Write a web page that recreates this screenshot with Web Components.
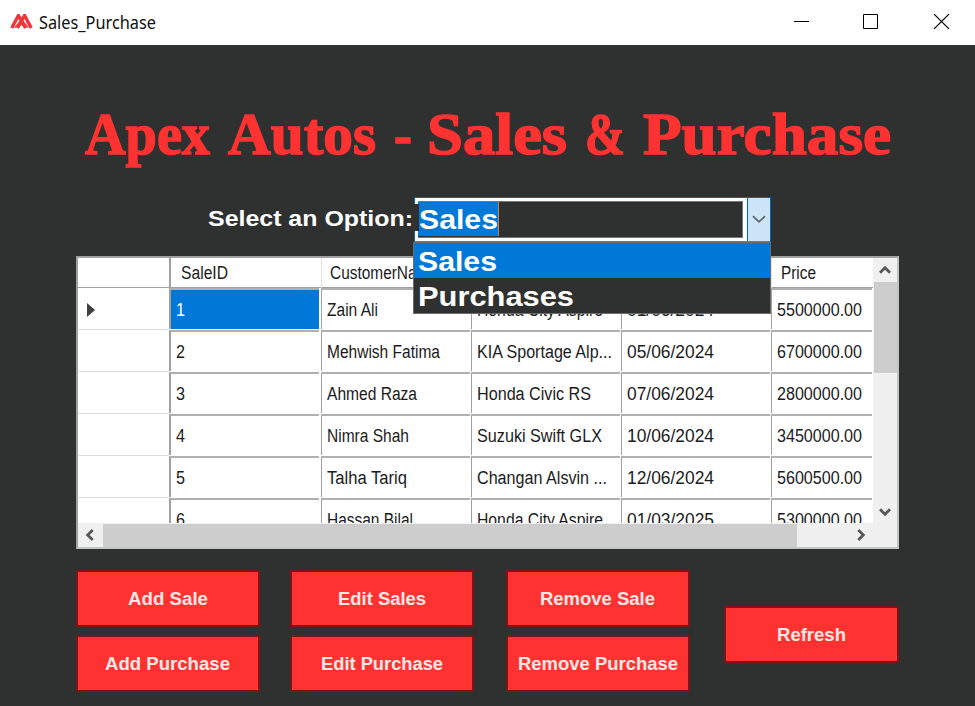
<!DOCTYPE html>
<html lang="en">
<head>
<meta charset="utf-8">
<title>Sales_Purchase</title>
<style>
html,body{margin:0;height:100%;overflow:hidden;background:#2f3130;font-family:"Liberation Sans",Arial,sans-serif}
</style>
</head>
<body>
<sales-window></sales-window>
<script>
const define = (name, html, ready) => customElements.define(name, class extends HTMLElement {
  constructor() { super(); this.attachShadow({mode: 'open'}); }
  connectedCallback() {
    this.shadowRoot.innerHTML = html;
    if (ready) ready(this, this.shadowRoot);
  }
});

// A single line of text condensed or expanded to the width given in "w".
customElements.define('fit-text', class extends HTMLElement {
  connectedCallback() {
    const label = this.getAttribute('text');
    const root = this.shadowRoot || this.attachShadow({mode: 'open'});
    root.innerHTML = `<style>:host{display:block;flex:none;line-height:1;white-space:pre;width:${this.getAttribute('w')}px}
      span{display:inline-block;transform-origin:0 0;vertical-align:top}</style><span></span>`;
    const s = root.querySelector('span');
    s.textContent = label;
    const n = s.getBoundingClientRect().width;
    if (n) s.style.transform = `scaleX(${this.getAttribute('w') / n})`;
  }
});

define('title-bar', `<style>
:host{display:flex;height:45px;background:#fff;color:#111;align-items:center;box-sizing:border-box;font:18px "Noto Sans","Open Sans",sans-serif}
.logo{margin-left:10px;margin-top:-3px}
fit-text{margin-left:6px;margin-top:-1px}
.ctl{margin-left:auto;margin-top:-2px;display:flex;gap:54px;margin-right:25px}
svg{display:block}
</style>
<svg class="logo" width="23" height="15" viewBox="0 0 23 15" fill="none" stroke="#f23338" stroke-width="3.4">
<path d="M1.8 14 8.4 1.5 15.6 14M7.4 14 14.6 1.5 21.2 14"/><path d="M5 13.6 11.5 5.6 18 13.6M8.4 13 11.5 9.6 14.6 13" stroke-width="1.5"/></svg>
<fit-text w="117" text="Sales_Purchase"></fit-text>
<div class="ctl">
<svg width="15" height="15"><path d="M0 7.5H15" stroke="#000"/></svg>
<svg width="15" height="15"><path d="M.5 .5H14.5V14.5H.5Z" fill="none" stroke="#000"/></svg>
<svg width="18" height="15" viewBox="-2 0 18 15"><path d="M0 0 15 15M15 0 0 15" stroke="#000" stroke-width="1.1"/></svg>
</div>`);

define('option-box', `<style>
:host{display:block;position:relative;width:357px;height:45px;color:#fff;font-weight:bold;font-size:28px}
.box{display:flex;height:45px;box-sizing:border-box;border:1px solid #0067b8;border-bottom-color:#5d7f95;background:#fff}
.edit{flex:1;margin:3px 4px 3px 3px;background:#2f3130;border:1px solid #777;border-left:0;display:flex;align-items:flex-start}
.sel{background:#0078d7;height:34px;padding:4px 0 0 1px;box-sizing:border-box;border-right:1px solid #d48347}
.drop{width:22px;border-left:1px solid #0067b8;background:#cce4f7;display:flex;align-items:center;justify-content:center}
.notch{position:absolute;left:-1px;top:7px;width:6px;height:27px;background:#2f3130}
.list{position:absolute;left:-1px;top:45px;width:358px;height:72px;box-sizing:border-box;border:1px solid #6b6d6d;background:#2f3130;z-index:2}
.item{height:35px;padding:5px 0 0 4px;box-sizing:border-box}
.on{background:#0078d7}
</style>
<div class="box"><div class="edit"><div class="sel"><fit-text w="79" text="Sales"></fit-text></div></div>
<div class="drop"><svg width="14" height="9" viewBox="0 0 14 9"><path d="M1 1.2 7 6.8 13 1.2" fill="none" stroke="#5b6670" stroke-width="1.8"/></svg></div></div>
<div class="notch"></div>
<div class="list"><div class="item on"><fit-text w="79" text="Sales"></fit-text></div><div class="item"><fit-text w="156" text="Purchases"></fit-text></div></div>`);

define('scroll-bar', `<style>
:host{display:flex;background:#f0f0f0;align-items:stretch}
:host([dir-v]){flex-direction:column}
.a{flex:none;display:flex;align-items:center;justify-content:center;width:25px}
.a svg{margin:-1px 0 0 -2px}
:host([dir-v]) .a{width:auto;height:24px}
.t{background:#cdcdcd;flex:none}
.s{flex:1}
</style><div class="a"></div><div class="t"></div><div class="s"></div><div class="a"></div>`, (el, r) => {
  const v = el.hasAttribute('dir-v'), a = r.querySelectorAll('.a');
  r.querySelector('.t').style[v ? 'height' : 'width'] = el.getAttribute('thumb') + 'px';
  const icon = deg => `<svg width="12" height="12" viewBox="0 0 12 12"><path transform="rotate(${deg} 6 6)" d="M1 8.7 6 3.7 11 8.7" fill="none" stroke="#585858" stroke-width="2.8"/></svg>`;
  a[0].innerHTML = icon(v ? 0 : -90);
  a[1].innerHTML = icon(v ? 180 : 90);
});

define('data-grid', `<style>
:host{display:grid;grid-template:266px 23px/796px 23px;width:823px;height:293px;box-sizing:border-box;border:2px solid #a0a0a0;border-right-color:#c4c4c4;border-bottom-color:#c4c4c4;background:#f0f0f0;color:#1b1b22;font-size:18px}
.view{overflow:hidden;background:#fff;width:795px;height:265px}
.r{display:grid;grid-template-columns:91px 152px repeat(3,150px) 102px;height:42px}
.h{height:30px}
.h>div{padding:6px 0 0 8px;border-left:1px solid #e2e2e2;box-sizing:border-box}
.h>div:first-child{border:0}
.h>div:nth-child(2){border-left:2px solid #a0a0a0;padding-left:10px}
.h>div:last-child{padding-left:9px}
.h{box-shadow:inset 0 -1px #a0a0a0}
.n{display:flex;align-items:center;padding:2px 0 0 9px;border-bottom:1px solid #dcdcdc;box-sizing:border-box}
.c{border-top:2px solid #b0b0b0;border-left:1px solid #a0a0a0;margin:0 1px 1px 0;padding:11px 0 0 5px;box-sizing:border-box;overflow:hidden}
.c:nth-child(2){border-left-width:2px;margin-right:2px;padding-left:5px}
.on{background:#0078d7;color:#fff}
</style><div class="view"></div><scroll-bar dir-v thumb="91"></scroll-bar><scroll-bar thumb="694"></scroll-bar>`, (el, r) => {
  const cell = (t, w) => t ? `<fit-text w="${w}" text="${t}"></fit-text>` : '';
  const heads = [['SaleID', 47], ['CustomerName', 108], ['', 0], ['', 0], ['Price', 35]];
  const rows = [
    ['1', 'Zain Ali', 51, 'Honda City Aspire', 126, '01/06/2024', '5500000.00'],
    ['2', 'Mehwish Fatima', 113, 'KIA Sportage Alp...', 135, '05/06/2024', '6700000.00'],
    ['3', 'Ahmed Raza', 90, 'Honda Civic RS', 114, '07/06/2024', '2800000.00'],
    ['4', 'Nimra Shah', 82, 'Suzuki Swift GLX', 125, '10/06/2024', '3450000.00'],
    ['5', 'Talha Tariq', 80, 'Changan Alsvin ...', 130, '12/06/2024', '5600500.00'],
    ['6', 'Hassan Bilal', 86, 'Honda City Aspire', 126, '01/03/2025', '5300000.00']];
  r.querySelector('.view').innerHTML =
    `<div class="r h"><div></div>${heads.map(h => `<div>${cell(...h)}</div>`).join('')}</div>` +
    rows.map((d, i) => `<div class="r"><div class="n">${i ? '' : '<svg width="8" height="14"><path d="M0 0 8 7 0 14Z" fill="#404040"/></svg>'}</div>
      <div class="c${i ? '' : ' on'}">${cell(d[0], 9)}</div><div class="c">${cell(d[1], d[2])}</div><div class="c">${cell(d[3], d[4])}</div>
      <div class="c">${cell(d[5], 87)}</div><div class="c">${cell(d[6], 85)}</div></div>`).join('');
});

define('red-button', `<style>
:host{display:flex;width:184px;height:57px;box-sizing:border-box;border:2px solid #7b1415;background:#ff3232;color:#ffe7e4;font-size:18px;font-weight:bold;align-items:center;justify-content:center}
</style><slot></slot>`);

define('sales-window', `<style>
:host{display:flex;flex-direction:column;width:975px;height:706px;background:#2f3130;overflow:hidden}
.title{display:flex;margin:59px 0 0 85px;height:61px;font:bold 60px "Liberation Serif",serif;color:#ff3232;-webkit-text-stroke:1.5px #ff3232}
.title>*+*{margin-left:18px}
.pick{display:flex;margin:32px 0 0 208px;height:45px;color:#fff;font-size:22px;font-weight:bold}
.pick>fit-text{margin:11px 1px 0 0}
data-grid{margin:14px 0 0 76px}
.foot{display:flex;align-items:center;margin:21px 0 0 76px}
.acts{display:grid;grid-template-columns:214px 216px 184px;row-gap:8px;height:122px;width:615px}
.foot>red-button{width:175px;margin:7px 0 0 33px}
.acts fit-text{margin-left:-1px}
</style>
<title-bar></title-bar>
<div class="title"><fit-text w="125" text="Apex"></fit-text><fit-text w="148" text="Autos"></fit-text><fit-text w="18" text="-"></fit-text><fit-text w="140" style="margin-left:15px" text="Sales"></fit-text><fit-text w="40" text="&amp;"></fit-text><fit-text w="248" text="Purchase"></fit-text></div>
<div class="pick"><fit-text w="205" text="Select an Option:"></fit-text><option-box></option-box></div>
<data-grid></data-grid>
<div class="foot"><div class="acts">
<red-button><fit-text w="80" text="Add Sale"></fit-text></red-button>
<red-button><fit-text w="88" text="Edit Sales"></fit-text></red-button>
<red-button><fit-text w="115" text="Remove Sale"></fit-text></red-button>
<red-button><fit-text w="125" text="Add Purchase"></fit-text></red-button>
<red-button><fit-text w="122" text="Edit Purchase"></fit-text></red-button>
<red-button><fit-text w="160" text="Remove Purchase"></fit-text></red-button>
</div><red-button><fit-text w="69" text="Refresh"></fit-text></red-button></div>`);
</script>
</body>
</html>
